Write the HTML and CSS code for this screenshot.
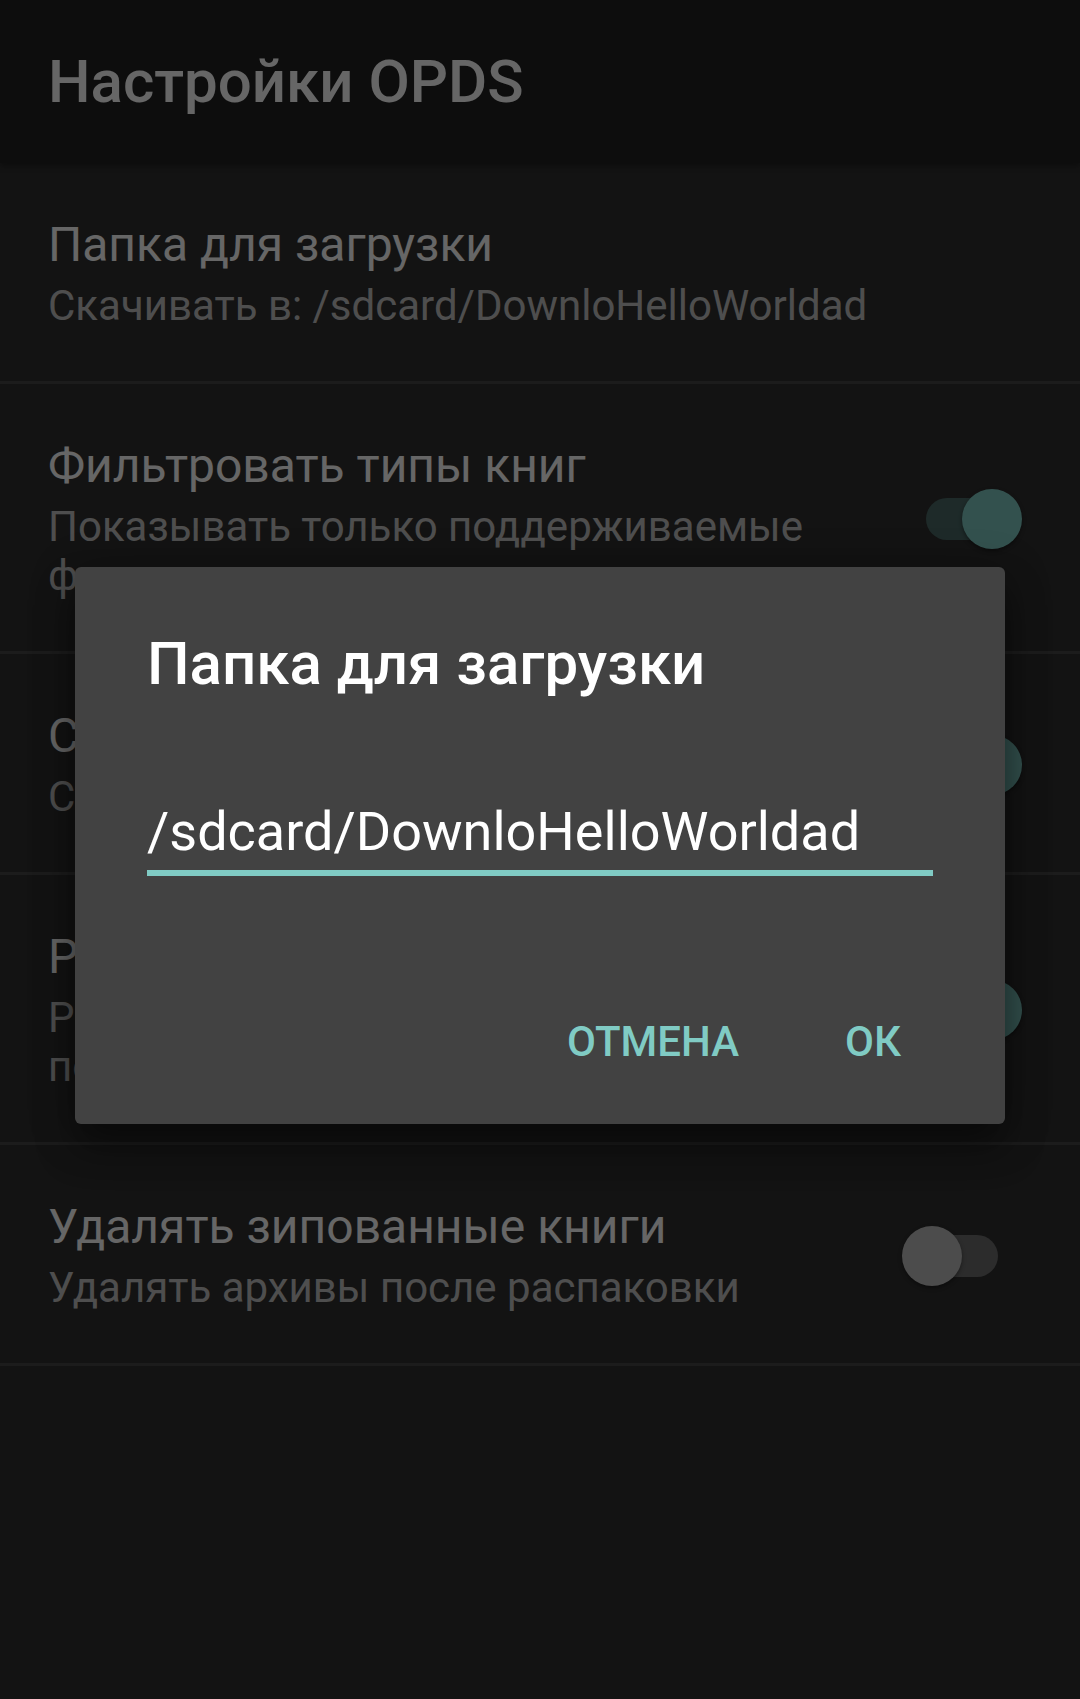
FILE: index.html
```html
<!DOCTYPE html>
<html lang="ru">
<head>
<meta charset="utf-8">
<title>Настройки OPDS</title>
<link rel="stylesheet" href="styles.css">
</head>
<body>
<div class="screen">
  <header class="appbar">
    <h1 class="appbar-title">Настройки OPDS</h1>
  </header>
  <ul class="prefs">
    <li class="pref">
      <div class="pref-text">
        <div class="pref-title">Папка для загрузки</div>
        <div class="pref-summary">Скачивать в: /sdcard/DownloHelloWorldad</div>
      </div>
    </li>
    <li class="pref">
      <div class="pref-text">
        <div class="pref-title">Фильтровать типы книг</div>
        <div class="pref-summary">Показывать только поддерживаемые форматы</div>
      </div>
      <div class="switch switch-on"><span class="track"></span><span class="thumb"></span></div>
    </li>
    <li class="pref">
      <div class="pref-text">
        <div class="pref-title">Сохранять обложки</div>
        <div class="pref-summary">Сохранять обложки вместе с книгами</div>
      </div>
      <div class="switch switch-on"><span class="track"></span><span class="thumb"></span></div>
    </li>
    <li class="pref">
      <div class="pref-text">
        <div class="pref-title">Распаковывать книги</div>
        <div class="pref-summary">Распаковывать книги из zip-архивов после загрузки</div>
      </div>
      <div class="switch switch-on"><span class="track"></span><span class="thumb"></span></div>
    </li>
    <li class="pref">
      <div class="pref-text">
        <div class="pref-title">Удалять зипованные книги</div>
        <div class="pref-summary">Удалять архивы после распаковки</div>
      </div>
      <div class="switch"><span class="track"></span><span class="thumb"></span></div>
    </li>
  </ul>

  <div class="scrim"></div>

  <div class="dialog" role="dialog">
    <h2 class="dialog-title">Папка для загрузки</h2>
    <div class="dialog-field">
      <div class="field-value">/sdcard/DownloHelloWorldad</div>
    </div>
    <div class="dialog-actions">
      <span class="action">ОТМЕНА</span>
      <span class="action">ОК</span>
    </div>
  </div>
</div>
</body>
</html>
```

FILE: styles.css
```css
* {
  box-sizing: border-box;
}

html, body {
  margin: 0;
  padding: 0;
}

body {
  background: #303030;
  font-family: Roboto, "Noto Sans", "Liberation Sans", sans-serif;
  color: #ffffff;
}

.screen {
  position: relative;
  width: 1080px;
  height: 1699px;
  overflow: hidden;
  background: #303030;
}

.appbar {
  height: 163px;
  background: #212121;
  display: flex;
  align-items: center;
  padding-left: 48px;
  box-shadow: 0 3px 6px rgba(0, 0, 0, 0.35);
  position: relative;
  z-index: 1;
}

.appbar-title {
  margin: 0;
  font-size: 60px;
  font-weight: 500;
  line-height: 70px;
  color: #ffffff;
}

.prefs {
  list-style: none;
  margin: 0;
  padding: 0;
}

.pref {
  display: flex;
  align-items: center;
  padding: 54px 0 51px 48px;
  border-bottom: 3px solid #484848;
}

.pref-text {
  flex: 1;
  min-width: 0;
}

.pref-title {
  font-size: 48px;
  line-height: 56px;
  color: #ffffff;
}

.pref-summary {
  margin-top: 8px;
  font-size: 42px;
  line-height: 49px;
  color: rgba(255, 255, 255, 0.72);
}

.switch {
  position: relative;
  flex: none;
  width: 120px;
  height: 60px;
  margin-left: 48px;
  margin-right: 58px;
}

.track {
  position: absolute;
  left: 24px;
  top: 9px;
  width: 72px;
  height: 42px;
  border-radius: 21px;
  background: #6e6e6e;
}

.thumb {
  position: absolute;
  left: 0;
  top: 0;
  width: 60px;
  height: 60px;
  border-radius: 50%;
  background: #bdbdbd;
  box-shadow: 0 2px 4px rgba(0, 0, 0, 0.4);
}

.switch-on .track {
  background: #4b6a67;
}

.switch-on .thumb {
  left: 60px;
  background: #80cbc4;
}

.scrim {
  position: absolute;
  inset: 0;
  background: rgba(0, 0, 0, 0.6);
  z-index: 2;
}

.dialog {
  position: absolute;
  left: 75px;
  top: 567px;
  width: 930px;
  z-index: 3;
  background: #424242;
  border-radius: 6px;
  padding: 62px 72px 57px 72px;
  box-shadow: 0 24px 38px rgba(0, 0, 0, 0.35), 0 9px 46px rgba(0, 0, 0, 0.3);
}

.dialog-title {
  margin: 0;
  font-size: 60px;
  font-weight: 500;
  line-height: 70px;
  color: #ffffff;
}

.dialog-field {
  margin-top: 101px;
  padding-bottom: 6px;
  border-bottom: 6px solid #80cbc4;
}

.field-value {
  font-size: 54px;
  line-height: 64px;
  color: #ffffff;
  white-space: nowrap;
}

.dialog-actions {
  margin-top: 141px;
  display: flex;
  justify-content: flex-end;
  gap: 106px;
  padding-right: 32px;
}

.action {
  font-size: 42px;
  font-weight: 500;
  line-height: 50px;
  color: #80cbc4;
  letter-spacing: 0;
}
```
